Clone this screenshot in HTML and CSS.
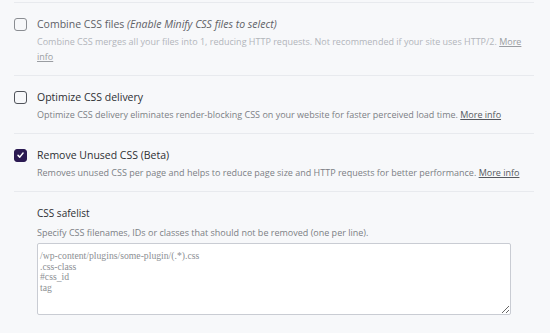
FILE: index.html
```html
<!DOCTYPE html>
<html>
<head>
<meta charset="utf-8">
<link rel="stylesheet" href="styles.css">
</head>
<body>
<div class="panel">
  <div class="row disabled">
    <div class="head">
      <span class="box"></span>
      <span class="title">Combine CSS files <em>(Enable Minify CSS files to select)</em></span>
    </div>
    <p class="desc">Combine CSS merges all your files into 1, reducing HTTP requests. Not recommended if your site uses HTTP/2. <a href="#">More info</a></p>
  </div>
  <div class="row">
    <div class="head">
      <span class="box"></span>
      <span class="title">Optimize CSS delivery</span>
    </div>
    <p class="desc">Optimize CSS delivery eliminates render-blocking CSS on your website for faster perceived load time. <a href="#">More info</a></p>
  </div>
  <div class="row">
    <div class="head">
      <span class="box checked"><svg viewBox="0 0 12 12" width="12" height="12"><path d="M3.3 6.4 L5.2 8.3 L8.8 3.9" fill="none" stroke="#fff" stroke-width="1.6" stroke-linecap="round" stroke-linejoin="round"/></svg></span>
      <span class="title">Remove Unused CSS (Beta)</span>
    </div>
    <p class="desc">Removes unused CSS per page and helps to reduce page size and HTTP requests for better performance. <a href="#">More info</a></p>
  </div>
  <div class="row sub">
    <div class="subtitle">CSS safelist</div>
    <p class="desc">Specify CSS filenames, IDs or classes that should not be removed (one per line).</p>
    <textarea class="area" placeholder="/wp-content/plugins/some-plugin/(.*).css&#10;.css-class&#10;#css_id&#10;tag"></textarea>
  </div>
</div>
</body>
</html>
```
FILE: styles.css
```css
html, body {
  margin: 0;
  padding: 0;
  background: #f7f8fa;
}
body {
  font-family: "Open Sans", "Noto Sans", sans-serif;
  width: 550px;
  height: 333px;
  overflow: hidden;
}
.panel {
  margin-left: 14px;
  width: 520px;
  padding-top: 2px;
}
.row {
  border-top: 1px solid #e8eaee;
  padding: 12px 0 11.5px 0;
}
.head {
  display: flex;
  align-items: center;
  gap: 10px;
  height: 18px;
}
.box {
  width: 13px;
  height: 13px;
  border: 1.5px solid #50535a;
  border-radius: 3px;
  box-sizing: border-box;
  display: flex;
  align-items: center;
  justify-content: center;
  flex: none;
}
.box.checked {
  background: #2b1a52;
  border-color: #2b1a52;
}
.box svg { display: block; }
.title {
  font-size: 10.5px;
  color: #2d2f33;
}
.title em { font-style: italic; }
.desc {
  margin: 0.5px 0 0 23px;
  font-size: 9px;
  line-height: 15px;
  color: #7c7f85;
}
.desc a {
  color: #55585e;
  text-decoration: underline;
}
.disabled .box { border-color: #8a8d92; }
.disabled .title { color: #5e6166; }
.disabled .desc { color: #b2b5ba; }
.disabled .desc a { color: #9a9da2; }
.sub {
  padding-left: 23px;
  padding-top: 13px;
}
.sub .subtitle {
  font-size: 10px;
  color: #2d2f33;
  line-height: 16px;
}
.sub .desc {
  margin-left: 0;
  margin-top: 3.5px;
}
.area {
  display: block;
  margin-top: 3.5px;
  width: 474px;
  height: 72px;
  box-sizing: border-box;
  border: 1px solid #c9ccd3;
  border-radius: 2px;
  background: #fff;
  padding: 7px 2px;
  font-family: "Liberation Serif", serif;
  font-size: 9.7px;
  line-height: 10.7px;
  resize: vertical;
}
.area::placeholder { color: #8c8f94; }
```
